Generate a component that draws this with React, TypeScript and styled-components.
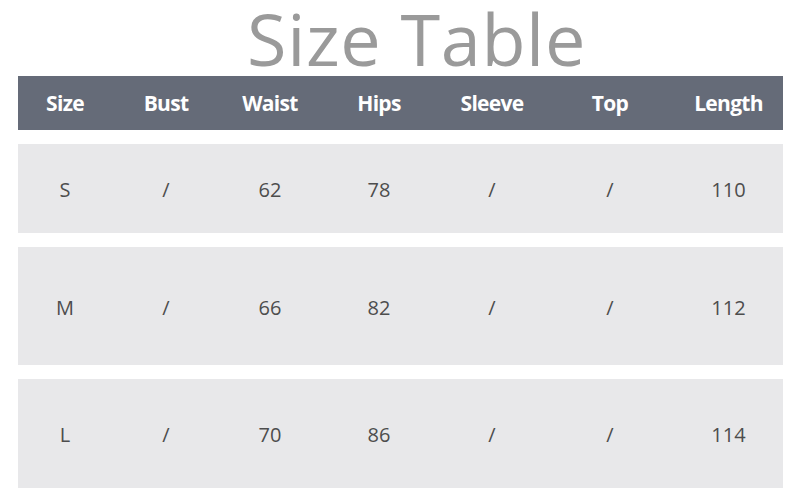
import styled, { createGlobalStyle } from "styled-components";

const GlobalStyle = createGlobalStyle`
  html, body {
    margin: 0;
    padding: 0;
    background: #ffffff;
  }
  body {
    font-family: "Open Sans", "Liberation Sans", sans-serif;
  }
`;

const Page = styled.div`
  width: 800px;
  padding: 0 17px 0 18px;
  box-sizing: border-box;
  display: flex;
  flex-direction: column;
`;

const Title = styled.h1`
  margin: 0;
  height: 76px;
  flex: none;
  font-size: 72px;
  font-weight: 400;
  line-height: 76px;
  color: #9a9a9a;
  text-align: center;
  letter-spacing: 0.6px;
  padding-left: 32px;
  white-space: nowrap;
`;

const columns = "94px 108px 100px 118px 108px 128px 1fr";

const HeaderBar = styled.div`
  display: grid;
  grid-template-columns: ${columns};
  align-items: center;
  height: 54px;
  flex: none;
  background: #656b78;
  margin-bottom: 14px;
`;

const HeadCell = styled.div`
  text-align: center;
  color: #ffffff;
  font-size: 21px;
  font-weight: 700;
  letter-spacing: -0.7px;
`;

const Row = styled.div<{ $h: number }>`
  display: grid;
  grid-template-columns: ${columns};
  align-items: center;
  height: ${(p) => p.$h}px;
  flex: none;
  background: #e8e8ea;
  margin-bottom: 14px;
`;

const Cell = styled.div`
  text-align: center;
  color: #4d4d4d;
  font-size: 20px;
  font-weight: 400;
  padding-top: 2px;
`;

const headers = ["Size", "Bust", "Waist", "Hips", "Sleeve", "Top", "Length"];

const rows = [
  { h: 89, cells: ["S", "/", "62", "78", "/", "/", "110"] },
  { h: 118, cells: ["M", "/", "66", "82", "/", "/", "112"] },
  { h: 109, cells: ["L", "/", "70", "86", "/", "/", "114"] },
];

export default function App() {
  return (
    <>
      <GlobalStyle />
      <Page>
        <Title>Size Table</Title>
        <HeaderBar>
          {headers.map((h) => (
            <HeadCell key={h}>{h}</HeadCell>
          ))}
        </HeaderBar>
        {rows.map((r) => (
          <Row key={r.cells[0]} $h={r.h}>
            {r.cells.map((c, i) => (
              <Cell key={i}>{c}</Cell>
            ))}
          </Row>
        ))}
      </Page>
    </>
  );
}
